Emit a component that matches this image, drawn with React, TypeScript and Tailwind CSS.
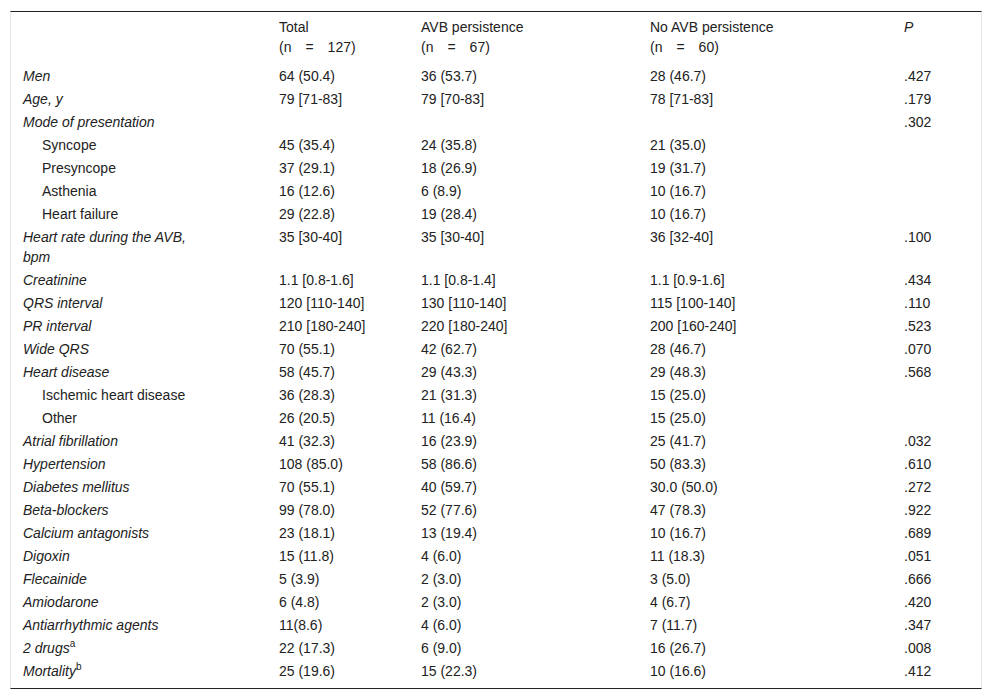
import React from "react";

type Row = {
  label: React.ReactNode;
  indent?: boolean;
  total?: string;
  avb?: string;
  noavb?: string;
  p?: string;
};

const rows: Row[] = [
  { label: "Men", total: "64 (50.4)", avb: "36 (53.7)", noavb: "28 (46.7)", p: ".427" },
  { label: "Age, y", total: "79 [71-83]", avb: "79 [70-83]", noavb: "78 [71-83]", p: ".179" },
  { label: "Mode of presentation", p: ".302" },
  { label: "Syncope", indent: true, total: "45 (35.4)", avb: "24 (35.8)", noavb: "21 (35.0)" },
  { label: "Presyncope", indent: true, total: "37 (29.1)", avb: "18 (26.9)", noavb: "19 (31.7)" },
  { label: "Asthenia", indent: true, total: "16 (12.6)", avb: "6 (8.9)", noavb: "10 (16.7)" },
  { label: "Heart failure", indent: true, total: "29 (22.8)", avb: "19 (28.4)", noavb: "10 (16.7)" },
  { label: "Heart rate during the AVB, bpm", total: "35 [30-40]", avb: "35 [30-40]", noavb: "36 [32-40]", p: ".100" },
  { label: "Creatinine", total: "1.1 [0.8-1.6]", avb: "1.1 [0.8-1.4]", noavb: "1.1 [0.9-1.6]", p: ".434" },
  { label: "QRS interval", total: "120 [110-140]", avb: "130 [110-140]", noavb: "115 [100-140]", p: ".110" },
  { label: "PR interval", total: "210 [180-240]", avb: "220 [180-240]", noavb: "200 [160-240]", p: ".523" },
  { label: "Wide QRS", total: "70 (55.1)", avb: "42 (62.7)", noavb: "28 (46.7)", p: ".070" },
  { label: "Heart disease", total: "58 (45.7)", avb: "29 (43.3)", noavb: "29 (48.3)", p: ".568" },
  { label: "Ischemic heart disease", indent: true, total: "36 (28.3)", avb: "21 (31.3)", noavb: "15 (25.0)" },
  { label: "Other", indent: true, total: "26 (20.5)", avb: "11 (16.4)", noavb: "15 (25.0)" },
  { label: "Atrial fibrillation", total: "41 (32.3)", avb: "16 (23.9)", noavb: "25 (41.7)", p: ".032" },
  { label: "Hypertension", total: "108 (85.0)", avb: "58 (86.6)", noavb: "50 (83.3)", p: ".610" },
  { label: "Diabetes mellitus", total: "70 (55.1)", avb: "40 (59.7)", noavb: "30.0 (50.0)", p: ".272" },
  { label: "Beta-blockers", total: "99 (78.0)", avb: "52 (77.6)", noavb: "47 (78.3)", p: ".922" },
  { label: "Calcium antagonists", total: "23 (18.1)", avb: "13 (19.4)", noavb: "10 (16.7)", p: ".689" },
  { label: "Digoxin", total: "15 (11.8)", avb: "4 (6.0)", noavb: "11 (18.3)", p: ".051" },
  { label: "Flecainide", total: "5 (3.9)", avb: "2 (3.0)", noavb: "3 (5.0)", p: ".666" },
  { label: "Amiodarone", total: "6 (4.8)", avb: "2 (3.0)", noavb: "4 (6.7)", p: ".420" },
  { label: "Antiarrhythmic agents", total: "11(8.6)", avb: "4 (6.0)", noavb: "7 (11.7)", p: ".347" },
  {
    label: (
      <>
        2 drugs<sup className="not-italic text-[10px] leading-none relative -top-[6px]">a</sup>
      </>
    ),
    total: "22 (17.3)", avb: "6 (9.0)", noavb: "16 (26.7)", p: ".008",
  },
  {
    label: (
      <>
        Mortality<sup className="not-italic text-[10px] leading-none relative -top-[6px]">b</sup>
      </>
    ),
    total: "25 (19.6)", avb: "15 (22.3)", noavb: "10 (16.6)", p: ".412",
  },
];

const grid = "grid grid-cols-[256px_142px_229px_254px_90px]";

function NHead({ n }: { n: string }) {
  return (
    <span className="whitespace-pre">{"(n\u2002\u2002=\u2002\u2002" + n + ")"}</span>
  );
}

export default function App() {
  return (
    <div className="bg-white min-h-[700px] pt-[11px] pl-[10px] font-['Liberation_Sans',Arial,sans-serif] text-[14px] text-[#222]">
      <div className="w-[972px] border-t border-t-[#222] border-b border-b-[#222] border-l border-l-[#e6e6e6] border-r border-r-[#e6e6e6] pb-[6px]">
        <div className={`${grid} leading-[20px] pt-[5px] pb-[7px]`}>
          <div />
          <div className="pl-3">
            <div>Total</div>
            <NHead n="127" />
          </div>
          <div className="pl-3">
            <div>AVB persistence</div>
            <NHead n="67" />
          </div>
          <div className="pl-3">
            <div>No AVB persistence</div>
            <NHead n="60" />
          </div>
          <div className="pl-3 italic">P</div>
        </div>
        {rows.map((r, i) => (
          <div key={i} className={`${grid} leading-[20px] py-[1.5px]`}>
            <div className={`${r.indent ? "pl-[31px] not-italic" : "pl-3 italic"} pr-[50px]`}>{r.label}</div>
            <div className="pl-3">{r.total}</div>
            <div className="pl-3">{r.avb}</div>
            <div className="pl-3">{r.noavb}</div>
            <div className="pl-3">{r.p}</div>
          </div>
        ))}
      </div>
    </div>
  );
}
